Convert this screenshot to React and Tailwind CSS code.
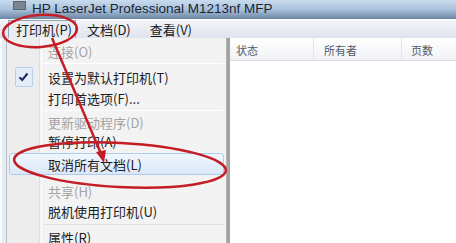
import React from "react";

const cjk = { fontFamily: '"Noto Sans CJK SC", "Noto Sans", sans-serif' };

function Sep() {
  return (
    <div className="h-[5px] flex items-center pl-[37px] pr-[3px]">
      <div className="h-[1px] w-full bg-[#e0e0e0] border-b border-white" />
    </div>
  );
}

function Item({ label, h = "h-[20px]", disabled, checked, active }) {
  return (
    <div className={`${h} flex items-center relative`}>
      {active && (
        <div className="absolute inset-x-[2px] inset-y-0 rounded-[3px] border border-[#aecbf0] bg-gradient-to-b from-[#f0f6fd] to-[#dbe8f8]" />
      )}
      <div className="w-[33px] h-full flex items-center justify-center relative">
        {checked && (
          <div className="w-[18px] h-[20px] rounded-[2px] border border-[#b9cfea] bg-[#e4ecf7] flex items-center justify-center">
            <svg width="11" height="10" viewBox="0 0 11 10">
              <path d="M1.5 5.2 L4.2 8 L9.5 1.5" fill="none" stroke="#1d2a66" strokeWidth="2" />
            </svg>
          </div>
        )}
      </div>
      <span
        className={`relative pl-[8px] text-[13px] leading-none ${disabled ? "text-[#a3a3a3]" : "text-[#1c1c1c]"}`}
        style={cjk}
      >
        {label}
      </span>
    </div>
  );
}

export default function App() {
  return (
    <div className="w-[456px] h-[243px] relative overflow-hidden bg-white select-none">
      {/* Title bar */}
      <div className="h-[19px] flex items-center bg-gradient-to-b from-[#c9dbee] via-[#a8c1db] to-[#6d86a4]">
        <div className="ml-[13px] w-[13px] h-[9px] -mt-[8px] bg-[#7c8590] border border-[#5d636b]" />
        <span
          className="ml-[6px] -mt-[2px] text-[13.5px] leading-none text-[#1b2533]"
          style={{ fontFamily: '"Liberation Sans", Arial, sans-serif' }}
        >
          HP LaserJet Professional M1213nf MFP
        </span>
      </div>

      {/* Menu bar */}
      <div className="h-[19px] flex items-end bg-gradient-to-b from-[#f4f5fa] to-[#dfe3ee] border-t border-white">
        <div className="ml-[8px] w-[68px] h-[18px] flex items-center pl-[7px] border border-b-0 border-[#97a5b9] bg-[#e9ecf3]">
          <span className="text-[13px] leading-none text-[#1a1a1a]" style={cjk}>打印机(P)</span>
        </div>
        <div className="h-[18px] flex items-center pl-[11px]">
          <span className="text-[13px] leading-none text-[#1a1a1a]" style={cjk}>文档(D)</span>
        </div>
        <div className="h-[18px] flex items-center pl-[19px]">
          <span className="text-[13px] leading-none text-[#1a1a1a]" style={cjk}>查看(V)</span>
        </div>
      </div>

      {/* Body */}
      <div className="h-[205px] flex">
        {/* window frame strip */}
        <div className="w-[7px] bg-[#e6ebf2] border-l-2 border-r border-l-[#f7f9fb] border-r-[#b4bdc9]" />

        {/* dropdown menu */}
        <div className="w-[220px] relative bg-[#f3f3f3] border-r border-[#b0b0b0]">
          <div className="absolute left-0 top-0 bottom-0 w-[33px] bg-[#ededed] border-r border-[#dedede]" />
          <div className="absolute left-[34px] top-0 bottom-0 w-[1px] bg-white" />
          <div className="relative flex flex-col">
            <div className="h-[3px]" />
            <Item label="连接(O)" disabled />
            <Sep />
            <Item label="设置为默认打印机(T)" h="h-[22px]" checked />
            <Item label="打印首选项(F)..." />
            <Sep />
            <Item label="更新驱动程序(D)" h="h-[19px]" disabled />
            <Item label="暂停打印(A)" h="h-[19px]" />
            <div className="h-[2px]" />
            <Item label="取消所有文档(L)" h="h-[22px]" active />
            <div className="h-[6px]" />
            <Item label="共享(H)" disabled />
            <Item label="脱机使用打印机(U)" />
            <div className="h-[6px] flex items-center pl-[37px] pr-[3px]">
              <div className="h-[1px] w-full bg-[#e0e0e0]" />
            </div>
            <Item label="属性(R)" />
          </div>
        </div>

        {/* list pane */}
        <div className="flex-1 flex flex-col border-l-[3px] border-[#a3a3a3]">
          <div className="h-[23px] flex items-center bg-gradient-to-b from-white to-[#f1f2f5] border-b border-[#dadde3]">
            <div className="w-[84px] h-full flex items-center pl-[6px] pt-[2px] border-r border-[#e3e5ea]">
              <span className="text-[11px] text-[#4d5b6e]" style={cjk}>状态</span>
            </div>
            <div className="w-[88px] h-full flex items-center pl-[10px] pt-[2px] border-r border-[#e3e5ea]">
              <span className="text-[11px] text-[#4d5b6e]" style={cjk}>所有者</span>
            </div>
            <div className="flex-1 h-full flex items-center pl-[9px] pt-[2px]">
              <span className="text-[11px] text-[#4d5b6e]" style={cjk}>页数</span>
            </div>
          </div>
          <div className="flex-1 bg-white" />
        </div>
      </div>

      {/* red annotations */}
      <svg className="absolute inset-0 pointer-events-none" width="456" height="243" viewBox="0 0 456 243">
        <ellipse cx="40" cy="31" rx="37" ry="16" transform="rotate(-4 40 31)" fill="none" stroke="#c41d26" strokeWidth="2.5" />
        <line x1="52" y1="38" x2="102" y2="156" stroke="#c41d26" strokeWidth="2.5" />
        <path d="M104 163 L96 152 L106 150 Z" fill="#c41d26" />
        <ellipse cx="120" cy="165" rx="106" ry="22" transform="rotate(3 120 165)" fill="none" stroke="#c41d26" strokeWidth="2.5" />
      </svg>
    </div>
  );
}
